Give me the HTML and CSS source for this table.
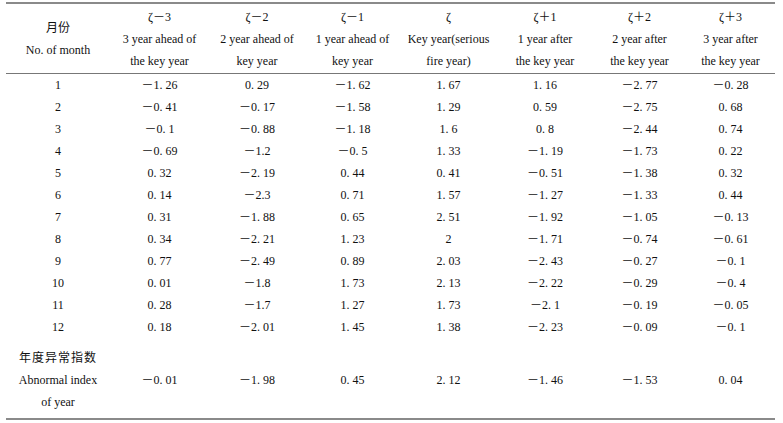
FILE: index.html
```html
<!DOCTYPE html>
<html lang="zh">
<head>
<meta charset="utf-8">
<title>Monthly abnormal index</title>
<link rel="stylesheet" href="styles.css">
</head>
<body>
<table class="data">
  <colgroup>
    <col class="c0"><col class="c1"><col class="c2"><col class="c3"><col class="c4"><col class="c5"><col class="c6"><col class="c7">
  </colgroup>
  <thead>
    <tr>
      <th class="first">月份<br>No. of month</th>
      <th>ζ－3<br>3 year ahead of<br>the key year</th>
      <th>ζ－2<br>2 year ahead of<br>key year</th>
      <th>ζ－1<br>1 year ahead of<br>key year</th>
      <th>ζ<br>Key year(serious<br>fire year)</th>
      <th>ζ＋1<br>1 year after<br>the key year</th>
      <th>ζ＋2<br>2 year after<br>the key year</th>
      <th>ζ＋3<br>3 year after<br>the key year</th>
    </tr>
  </thead>
  <tbody>
    <tr><td>1</td><td>－1. 26</td><td>0. 29</td><td>－1. 62</td><td>1. 67</td><td>1. 16</td><td>－2. 77</td><td>－0. 28</td></tr>
    <tr><td>2</td><td>－0. 41</td><td>－0. 17</td><td>－1. 58</td><td>1. 29</td><td>0. 59</td><td>－2. 75</td><td>0. 68</td></tr>
    <tr><td>3</td><td>－0. 1</td><td>－0. 88</td><td>－1. 18</td><td>1. 6</td><td>0. 8</td><td>－2. 44</td><td>0. 74</td></tr>
    <tr><td>4</td><td>－0. 69</td><td>－1.2</td><td>－0. 5</td><td>1. 33</td><td>－1. 19</td><td>－1. 73</td><td>0. 22</td></tr>
    <tr><td>5</td><td>0. 32</td><td>－2. 19</td><td>0. 44</td><td>0. 41</td><td>－0. 51</td><td>－1. 38</td><td>0. 32</td></tr>
    <tr><td>6</td><td>0. 14</td><td>－2.3</td><td>0. 71</td><td>1. 57</td><td>－1. 27</td><td>－1. 33</td><td>0. 44</td></tr>
    <tr><td>7</td><td>0. 31</td><td>－1. 88</td><td>0. 65</td><td>2. 51</td><td>－1. 92</td><td>－1. 05</td><td>－0. 13</td></tr>
    <tr><td>8</td><td>0. 34</td><td>－2. 21</td><td>1. 23</td><td>2</td><td>－1. 71</td><td>－0. 74</td><td>－0. 61</td></tr>
    <tr><td>9</td><td>0. 77</td><td>－2. 49</td><td>0. 89</td><td>2. 03</td><td>－2. 43</td><td>－0. 27</td><td>－0. 1</td></tr>
    <tr><td>10</td><td>0. 01</td><td>－1.8</td><td>1. 73</td><td>2. 13</td><td>－2. 22</td><td>－0. 29</td><td>－0. 4</td></tr>
    <tr><td>11</td><td>0. 28</td><td>－1.7</td><td>1. 27</td><td>1. 73</td><td>－2. 1</td><td>－0. 19</td><td>－0. 05</td></tr>
    <tr><td>12</td><td>0. 18</td><td>－2. 01</td><td>1. 45</td><td>1. 38</td><td>－2. 23</td><td>－0. 09</td><td>－0. 1</td></tr>
  </tbody>
  <tfoot>
    <tr>
      <td class="label"><span class="cn">年度异常指数</span><br>Abnormal index<br>of year</td>
      <td>－0. 01</td><td>－1. 98</td><td>0. 45</td><td>2. 12</td><td>－1. 46</td><td>－1. 53</td><td>0. 04</td>
    </tr>
  </tfoot>
</table>
</body>
</html>
```

FILE: styles.css
```css
html, body {
  margin: 0;
  padding: 0;
  background: #ffffff;
}

body {
  padding: 2px 0 0 6px;
  font-family: "Liberation Serif", "Noto Sans CJK SC", serif;
  font-size: 12px;
  color: #111111;
}

.data {
  width: 769px;
  table-layout: fixed;
  border-collapse: collapse;
  border-top: 2px solid #8a8a8a;
  border-bottom: 2px solid #8a8a8a;
}

.c0 { width: 104px; }
.c1 { width: 99px; }
.c2 { width: 96px; }
.c3 { width: 95px; }
.c4 { width: 97px; }
.c5 { width: 96px; }
.c6 { width: 93px; }
.c7 { width: 89px; }

.data th {
  font-weight: normal;
  text-align: center;
  vertical-align: middle;
  line-height: 22px;
  padding: 2px 0 1px;
  border-bottom: 1px solid #777777;
  white-space: nowrap;
}

.data td {
  text-align: center;
  vertical-align: middle;
  height: 22px;
  line-height: 22px;
  padding: 0;
  white-space: nowrap;
}

.data tfoot td {
  padding: 9px 0 5px;
}

.data .first,
.data .cn {
  font-weight: normal;
}

.data .cn {
  letter-spacing: 1px;
}
```
